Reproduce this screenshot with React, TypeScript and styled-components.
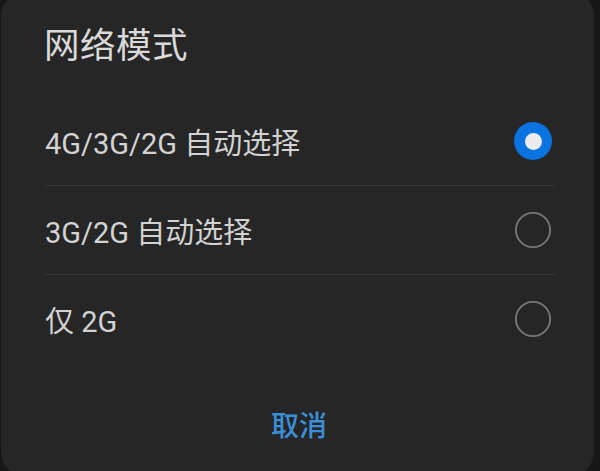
import React, { useState } from 'react';
import styled, { createGlobalStyle } from 'styled-components';

const GlobalStyle = createGlobalStyle`
  html, body {
    margin: 0;
    padding: 0;
    background: #171717;
  }
  body {
    width: 600px;
    height: 471px;
    overflow: hidden;
    font-family: Roboto, "Noto Sans CJK SC", sans-serif;
  }
`;

const Dialog = styled.div`
  box-sizing: border-box;
  width: 593px;
  height: 484px;
  margin: -8px 0 0 1px;
  background: #262626;
  border-radius: 24px;
  display: flex;
  flex-direction: column;
  padding: 36px 39px 0 44px;
`;

const Title = styled.h1`
  margin: 0 0 33px -1px;
  height: 36px;
  line-height: 36px;
  font-size: 35.5px;
  font-weight: 400;
  color: #d9d9d9;
  letter-spacing: 0.5px;
`;

const OptionList = styled.div`
  display: flex;
  flex-direction: column;
`;

const Option = styled.div`
  height: 88px;
  display: flex;
  align-items: center;
  justify-content: space-between;
  cursor: pointer;

  &:not(:last-child) {
    border-bottom: 1px solid #383838;
  }
`;

const OptionLabel = styled.span`
  font-size: 29px;
  font-weight: 400;
  color: #d2d2d2;
`;

const Radio = styled.span<{ checked: boolean }>`
  box-sizing: border-box;
  width: 38px;
  height: 38px;
  margin-right: 3px;
  border-radius: 50%;
  display: flex;
  align-items: center;
  justify-content: center;
  border: ${props => (props.checked ? 'none' : '2px solid #767676')};
  background: ${props => (props.checked ? '#0a73e0' : 'transparent')};
  ${props => !props.checked && 'transform: scale(0.95);'}

  &::after {
    content: '';
    display: ${props => (props.checked ? 'block' : 'none')};
    width: 17px;
    height: 17px;
    border-radius: 50%;
    background: #ebebeb;
  }
`;

const Footer = styled.div`
  display: flex;
  justify-content: center;
  margin-top: 44px;
`;

const CancelButton = styled.button`
  background: none;
  border: none;
  padding: 0;
  height: 40px;
  line-height: 40px;
  font-family: inherit;
  font-size: 28px;
  font-weight: 500;
  color: #3b8fd8;
  margin-left: -2px;
  cursor: pointer;
`;

const options = ['4G/3G/2G 自动选择', '3G/2G 自动选择', '仅 2G'];

export default function App() {
  const [selected, setSelected] = useState(0);

  return (
    <>
      <GlobalStyle />
      <Dialog>
        <Title>网络模式</Title>
        <OptionList>
          {options.map((label, index) => (
            <Option key={label} onClick={() => setSelected(index)}>
              <OptionLabel>{label}</OptionLabel>
              <Radio checked={selected === index} />
            </Option>
          ))}
        </OptionList>
        <Footer>
          <CancelButton>取消</CancelButton>
        </Footer>
      </Dialog>
    </>
  );
}
